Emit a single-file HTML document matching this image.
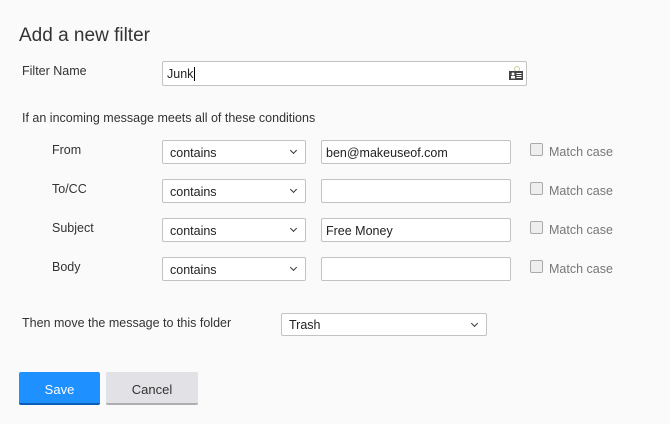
<!DOCTYPE html><html><head><style>
body{margin:0;width:670px;height:424px;background:#fafafa;font-family:"Liberation Sans",sans-serif;color:#333;position:relative;overflow:hidden}
.a{position:absolute;font-size:12.5px;line-height:16px}
.box{position:absolute;background:#fff;border:1px solid #c2c2c2;border-radius:2px;box-sizing:border-box;font-size:12.5px;color:#222;padding-left:5px}
.sel{height:24px;line-height:24px;padding-left:7px}
.sel:after{content:"";position:absolute;right:9px;top:7px;width:4px;height:4px;border-right:1.5px solid #333;border-bottom:1.5px solid #333;transform:rotate(45deg)}
.cb{position:absolute;width:11px;height:11px;border:1px solid #aaa;border-radius:2px;background:#eee}
.mc{position:absolute;font-size:12.5px;color:#777}
</style></head><body>
<div class="a" style="left:19px;top:25px;font-size:19px;line-height:22px;color:#333">Add a new filter</div>
<div class="a" style="left:22px;top:63px">Filter Name</div>
<div class="box" style="left:162px;top:61px;width:365px;height:25px;line-height:24px;padding-left:4px">Junk<span style="border-left:1px solid #000;margin-left:1px"></span>
<svg style="position:absolute;right:2px;top:4px" width="16" height="14" viewBox="0 0 16 14"><circle cx="9" cy="3" r="2.5" fill="none" stroke="#cc9" stroke-width="1"/><rect x="1" y="5" width="14" height="9" fill="#444"/><circle cx="5" cy="8" r="1.5" fill="#fff"/><rect x="3" y="10" width="4" height="2.5" fill="#fff"/><rect x="8.5" y="7" width="5" height="1" fill="#fff"/><rect x="8.5" y="9" width="5" height="1" fill="#fff"/><rect x="8.5" y="11" width="5" height="1" fill="#fff"/></svg></div>
<div class="a" style="left:22px;top:110px">If an incoming message meets all of these conditions</div>

<div class="a" style="left:52px;top:142px">From</div>
<div class="box sel" style="left:162px;top:140px;width:144px">contains</div>
<div class="box" style="left:321px;top:140px;width:190px;height:24px;line-height:24px;padding-left:4px">ben@makeuseof.com</div>
<div class="cb" style="left:530px;top:143px"></div><div class="mc" style="left:549px;top:145px">Match case</div>

<div class="a" style="left:52px;top:181px">To/CC</div>
<div class="box sel" style="left:162px;top:179px;width:144px">contains</div>
<div class="box" style="left:321px;top:179px;width:190px;height:24px"></div>
<div class="cb" style="left:530px;top:182px"></div><div class="mc" style="left:549px;top:184px">Match case</div>

<div class="a" style="left:52px;top:220px">Subject</div>
<div class="box sel" style="left:162px;top:218px;width:144px">contains</div>
<div class="box" style="left:321px;top:218px;width:190px;height:24px;line-height:24px;padding-left:4px">Free Money</div>
<div class="cb" style="left:530px;top:221px"></div><div class="mc" style="left:549px;top:223px">Match case</div>

<div class="a" style="left:52px;top:259px">Body</div>
<div class="box sel" style="left:162px;top:257px;width:144px">contains</div>
<div class="box" style="left:321px;top:257px;width:190px;height:24px"></div>
<div class="cb" style="left:530px;top:260px"></div><div class="mc" style="left:549px;top:262px">Match case</div>

<div class="a" style="left:22px;top:315px">Then move the message to this folder</div>
<div class="box sel" style="left:281px;top:313px;width:206px;height:23px;line-height:23px;padding-left:7px">Trash</div>

<div style="position:absolute;left:19px;top:372px;width:81px;height:33px;background:#1e90ff;border-bottom:2px solid #0a5cb8;box-sizing:border-box;border-radius:2px;color:#fff;font-size:13px;text-align:center;line-height:36px">Save</div>
<div style="position:absolute;left:106px;top:372px;width:92px;height:33px;background:#e2e2e6;border-bottom:2px solid #aeaeb2;box-sizing:border-box;border-radius:2px;color:#333;font-size:13px;text-align:center;line-height:36px">Cancel</div>
</body></html>
